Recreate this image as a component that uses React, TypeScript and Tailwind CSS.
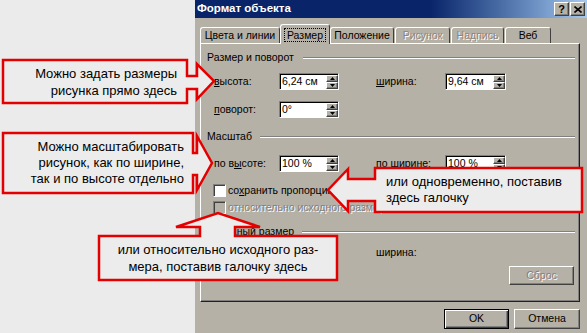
import React from "react";

const raised =
  "border border-t-white border-l-white border-r-[#404040] border-b-[#404040] shadow-[inset_-1px_-1px_0_#808080]";

const SpinArrow = ({ up }: { up?: boolean }) => (
  <div className={`flex h-[7px] w-[12px] items-center justify-center bg-[#b5b1a6] ${raised}`}>
    <svg width="5" height="3" viewBox="0 0 5 3">
      <polygon points={up ? "2.5,0 5,3 0,3" : "0,0 5,0 2.5,3"} fill="#000" />
    </svg>
  </div>
);

const SpinBox = ({ value, w }: { value: string; w: string }) => (
  <div
    className={`flex h-[17px] ${w} border border-t-[#808080] border-l-[#808080] border-r-white border-b-white bg-white shadow-[inset_1px_1px_0_#000]`}
  >
    <div className="flex-1 pl-[2px] leading-[15px]">{value}</div>
    <div className="flex flex-col pt-[1px]">
      <SpinArrow up />
      <SpinArrow />
    </div>
  </div>
);

const Etched = () => (
  <div className="h-[2px] flex-1 border-t border-b border-t-[#808080] border-b-white" />
);

const Header = ({ children, gap }: { children: React.ReactNode; gap: string }) => (
  <div className="flex h-[12px] items-center pl-[6px] pr-[4px]">
    <span className="whitespace-nowrap">{children}</span>
    <div className={`${gap} flex flex-1`}>
      <Etched />
    </div>
  </div>
);

const Tab = ({
  label,
  w,
  active,
  disabled,
}: {
  label: string;
  w: string;
  active?: boolean;
  disabled?: boolean;
}) => (
  <div
    className={`${w} flex items-center justify-center rounded-t-[3px] border-t border-l border-r border-t-white border-l-white border-r-[#404040] bg-[#b5b1a6] ${
      active ? "z-10 -mb-px h-[20px]" : "h-[16px]"
    } ${disabled ? "text-[#8a8780] [text-shadow:1px_1px_0_#fff]" : ""}`}
  >
    {active ? (
      <span className="border border-dotted border-black px-[2px] leading-[12px]">{label}</span>
    ) : (
      label
    )}
  </div>
);

const Check = ({ label, disabled }: { label: React.ReactNode; disabled?: boolean }) => (
  <div className="flex h-[13px] items-center pl-[12px]">
    <div
      className={`h-[13px] w-[13px] border border-t-[#808080] border-l-[#808080] border-r-white border-b-white shadow-[inset_1px_1px_0_#404040] ${
        disabled ? "bg-[#b5b1a6]" : "bg-white"
      }`}
    />
    <span
      className={`ml-[2px] whitespace-nowrap ${disabled ? "text-[#808080] [text-shadow:1px_1px_0_#fff]" : ""}`}
    >
      {label}
    </span>
  </div>
);

export default function App() {
  return (
    <div className="relative flex h-[333px] w-[587px] overflow-hidden bg-[#ebebeb] font-['Liberation_Sans',Arial,sans-serif] text-[10.5px] text-black">
      <div className="w-[195px] shrink-0" />

      {/* dialog */}
      <div className="flex flex-1 flex-col bg-[#b5b1a6]">
        <div className="flex h-[18px] items-center bg-gradient-to-r from-[#0a246a] from-60% to-[#a6caf0] pl-[2px] pr-[2px]">
          <span className="flex-1 text-[11.5px] font-bold text-white">Формат объекта</span>
          <div className={`flex h-[14px] w-[15px] items-center justify-center bg-[#b5b1a6] text-[11px] font-bold ${raised}`}>
            ?
          </div>
          <div className={`ml-[1px] flex h-[14px] w-[15px] items-center justify-center bg-[#b5b1a6] ${raised}`}>
            <svg width="8" height="7" viewBox="0 0 8 7">
              <path d="M0.5 0.5 L7.5 6.5 M7.5 0.5 L0.5 6.5" stroke="#000" strokeWidth="1.6" />
            </svg>
          </div>
        </div>

        {/* tabs */}
        <div className="mt-[6px] flex h-[19px] items-end pl-[5px]">
          <Tab label="Цвета и линии" w="w-[80px]" />
          <Tab label="Размер" w="w-[50px]" active />
          <Tab label="Положение" w="w-[64px]" />
          <div className="w-[1px]" />
          <Tab label="Рисунок" w="w-[55px]" disabled />
          <div className="w-[1px]" />
          <Tab label="Надпись" w="w-[53px]" disabled />
          <div className="w-[1px]" />
          <Tab label="Веб" w="w-[46px]" />
        </div>

        {/* panel */}
        <div className="ml-[5px] flex h-[259px] w-[380px] flex-col border border-t-white border-l-white border-r-[#202020] border-b-[#202020] pt-[8px] shadow-[inset_-1px_-1px_0_#808080]">
          <Header gap="ml-[9px]">Размер и поворот</Header>

          <div className="mt-[9px] flex h-[17px] items-center pl-[13px]">
            <span className="w-[65px]">
              <u>в</u>ысота:
            </span>
            <SpinBox value="6,24 см" w="w-[60px]" />
            <span className="ml-[37px] w-[69px]">
              <u>ш</u>ирина:
            </span>
            <SpinBox value="9,64 см" w="w-[61px]" />
          </div>

          <div className="mt-[11px] flex h-[17px] items-center pl-[13px]">
            <span className="w-[65px]">
              <u>п</u>оворот:
            </span>
            <SpinBox value="0°" w="w-[60px]" />
          </div>

          <div className="mt-[13px]">
            <Header gap="ml-[8px]">Масштаб</Header>
          </div>

          <div className="mt-[12px] flex h-[17px] items-center pl-[13px]">
            <span className="w-[65px]">
              по в<u>ы</u>соте:
            </span>
            <SpinBox value="100 %" w="w-[60px]" />
            <span className="ml-[37px] w-[69px]">
              по <u>ш</u>ирине:
            </span>
            <SpinBox value="100 %" w="w-[61px]" />
          </div>

          <div className="mt-[12px]">
            <Check
              label={
                <>
                  со<u>х</u>ранить пропорции
                </>
              }
            />
          </div>
          <div className="mt-[4px]">
            <Check label="относительно исходного размера" disabled />
          </div>

          <div className="mt-[12px]">
            <Header gap="ml-[8px]">Исходный размер</Header>
          </div>

          <div className="mt-[9px] flex h-[12px] items-center pl-[175px]">
            <span>ширина:</span>
          </div>

          <div className="mt-[7px] flex justify-end pr-[5px]">
            <div
              className={`flex h-[19px] w-[65px] items-center justify-center bg-[#b5b1a6] text-[#808080] [text-shadow:1px_1px_0_#fff] ${raised}`}
            >
              Сброс
            </div>
          </div>
        </div>

        {/* buttons */}
        <div className="mt-[7px] flex justify-end gap-[5px] pr-[7px]">
          <div className="flex h-[20px] w-[65px] items-center justify-center border border-black bg-[#b5b1a6] shadow-[inset_1px_1px_0_#fff,inset_-1px_-1px_0_#404040,inset_-2px_-2px_0_#808080]">
            OK
          </div>
          <div className={`flex h-[20px] w-[66px] items-center justify-center bg-[#b5b1a6] ${raised}`}>
            Отмена
          </div>
        </div>
      </div>

      {/* callouts */}
      <svg className="pointer-events-none absolute inset-0" width="587" height="333" viewBox="0 0 587 333">
        <g fill="#ececec" stroke="#e40000" strokeWidth="2.5" strokeLinejoin="miter">
          <polygon points="3,60 187,60 187,76 197,76 197,64 214,81 197,99 197,89 187,89 187,103 3,103" />
          <polygon points="3,133 193,133 193,153 197,153 197,136 212,163 197,190 197,175 193,175 193,193 3,193" />
          <polygon points="375,168 582,168 582,212 375,212 375,201 348,201 348,211 328,190 348,169 348,179 375,179" />
          <polygon points="99,236 200,236 200,227 176,227 218,213 260,227 235,227 235,236 337,236 337,280 99,280" />
        </g>
      </svg>

      <div className="pointer-events-none absolute left-[3px] top-[60px] flex h-[43px] w-[184px] flex-col justify-center pr-[10px] text-right text-[13px] leading-[17px]">
        <div>Можно задать размеры</div>
        <div>рисунка прямо здесь</div>
      </div>
      <div className="pointer-events-none absolute left-[3px] top-[133px] flex h-[60px] w-[190px] flex-col justify-center pr-[9px] text-right text-[13px] leading-[16px]">
        <div>Можно масштабировать</div>
        <div>рисунок, как по ширине,</div>
        <div>так и по высоте отдельно</div>
      </div>
      <div className="pointer-events-none absolute left-[375px] top-[168px] flex h-[44px] w-[207px] flex-col justify-center pl-[11px] text-[13px] leading-[16px]">
        <div>или одновременно, поставив</div>
        <div>здесь галочку</div>
      </div>
      <div className="pointer-events-none absolute left-[99px] top-[236px] flex h-[44px] w-[238px] flex-col justify-center text-center text-[13px] leading-[17px]">
        <div>или относительно исходного раз-</div>
        <div>мера, поставив галочку здесь</div>
      </div>
    </div>
  );
}
